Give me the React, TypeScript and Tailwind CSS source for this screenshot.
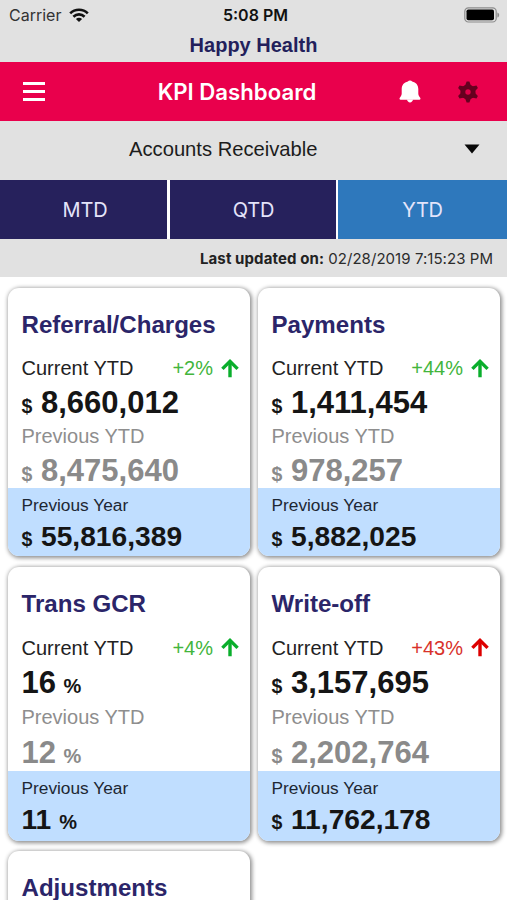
import React from "react";
import clsx from "clsx";

interface Kpi {
  title: string;
  change?: string;
  bad?: boolean;
  unit?: "$" | "%";
  current?: string;
  previous?: string;
  previousYear?: string;
  roomy?: boolean;
}

const kpis: Kpi[] = [
  { title: "Referral/Charges", change: "+2%", unit: "$", current: "8,660,012", previous: "8,475,640", previousYear: "55,816,389" },
  { title: "Payments", change: "+44%", unit: "$", current: "1,411,454", previous: "978,257", previousYear: "5,882,025" },
  { title: "Trans GCR", change: "+4%", unit: "%", current: "16", previous: "12", previousYear: "11", roomy: true },
  { title: "Write-off", change: "+43%", bad: true, unit: "$", current: "3,157,695", previous: "2,202,764", previousYear: "11,762,178", roomy: true },
  { title: "Adjustments" },
];

const WifiIcon = () => (
  <svg width="20" height="15" viewBox="0 0 20 15" fill="none" stroke="#111" strokeWidth="2.6">
    <path d="M1.2 5.4C6 0.6 14 0.6 18.8 5.4" />
    <path d="M4.4 8.7c3.2-3.1 8-3.1 11.2 0" />
    <path d="M10 14 6.9 10.9c1.8-1.7 4.4-1.7 6.2 0z" fill="#111" stroke="none" />
  </svg>
);

const BatteryIcon = () => (
  <svg width="36" height="16" viewBox="0 0 36 16">
    <rect x="0.8" y="0.8" width="31.4" height="14.2" rx="3.6" fill="none" stroke="#8c8c8c" strokeWidth="1.2" />
    <rect x="2.5" y="2.5" width="27.5" height="10.8" rx="1.8" fill="#000" />
    <path d="M33.4 5.4c2.4 0.9 2.4 4.2 0 5.1z" fill="#8c8c8c" />
  </svg>
);

const BellIcon = () => (
  <svg width="22" height="23" viewBox="0 0 22 23" fill="#fff">
    <path d="M11 0.5c-1 0-1.700 0.300-2.100 0.900C5 2.200 2.700 5 2.700 9v4.500c0 1.500-0.600 2.700-1.700 3.900-0.900 1-0.500 2.300 0.600 2.300h18.800c1.100 0 1.500-1.300 0.600-2.300-1.100-1.200-1.700-2.400-1.700-3.900V9c0-4-2.300-6.800-6.200-7.600C12.700 0.800 12 0.500 11 0.500z" />
    <path d="M8 19.500h6c-0.300 1.700-1.500 2.900-3 2.900s-2.700-1.200-3-2.900z" />
  </svg>
);

const GearIcon = () => (
  <svg width="22" height="22" viewBox="0 0 22 22">
    <g fill="#66001f">
      <circle cx="11" cy="11" r="7.600" />
      <path d="M9.600 0.400h2.800l1.600 4.600v12l-1.600 4.600H9.600L8 17V5z" />
      <path d="M9.600 0.400h2.800l1.600 4.600v12l-1.600 4.600H9.600L8 17V5z" transform="rotate(60 11 11)" />
      <path d="M9.600 0.400h2.800l1.600 4.600v12l-1.600 4.600H9.600L8 17V5z" transform="rotate(120 11 11)" />
    </g>
    <circle cx="11" cy="11" r="2.700" fill="#e0004a" />
  </svg>
);

const ArrowUp = () => (
  <svg width="18" height="19" viewBox="0 0 18 19" fill="none" stroke="currentColor" strokeWidth="3.400">
    <path d="M9 18.300V2.500" />
    <path d="M1.400 9.900 9 2.400l7.600 7.500" />
  </svg>
);

const Amount = ({ value, unit, small }: { value?: string; unit?: "$" | "%"; small?: boolean }) => (
  <div className="flex items-baseline whitespace-pre font-bold">
    {unit === "$" && <span className="w-[19.500px] shrink-0 text-[19.500px]">$</span>}
    <span className={small ? "text-[28.200px]" : "text-[31px]"}>{value}</span>
    {unit === "%" && <span className={clsx("text-[20px]", small ? "ml-2" : "ml-[7.500px]")}>%</span>}
  </div>
);

const KpiCard = ({ kpi }: { kpi: Kpi }) => (
  <div className="overflow-hidden rounded-[11px] bg-white shadow-[1px_1px_4px_1px_rgba(0,0,0,0.45)]">
    <div className={clsx("px-[13.500px] pt-5", kpi.roomy ? "h-[204px]" : "h-[200px]")}>
      <h2 className="text-[24.100px] leading-[34px] font-bold text-[#2b2569]">{kpi.title}</h2>
      {kpi.current && (
        <>
          <div className={clsx("flex h-7 items-center text-[20px] leading-7", kpi.roomy ? "mt-[13px]" : "mt-3")}>
            <span className="text-[#222]">Current YTD</span>
            <span className={clsx("ml-auto", kpi.bad ? "text-[#d8322a]" : "text-[#43b53c]")}>{kpi.change}</span>
            <span className={clsx("-mr-[2.500px] ml-2", kpi.bad ? "text-[#dd0000]" : "text-[#0aae2c]")}>
              <ArrowUp />
            </span>
          </div>
          <div className="h-[42px] leading-[42px] text-[#151515]">
            <Amount value={kpi.current} unit={kpi.unit} />
          </div>
          <div className={clsx("text-[20px] leading-6 text-[#8e8e8e]", kpi.roomy && "mt-px")}>Previous YTD</div>
          <div className={clsx("h-[37px] leading-[39px] text-[#8a8a8a]", kpi.roomy ? "mt-1" : "mt-[3px]")}>
            <Amount value={kpi.previous} unit={kpi.unit} />
          </div>
        </>
      )}
    </div>
    {kpi.previousYear && (
      <div className={clsx("bg-[#c0deff] px-[13.500px] pt-[5px] text-[#151515]", kpi.roomy ? "h-[70px]" : "h-[68px]")}>
        <div className="text-[17.300px] leading-6 text-[#1d2733]">Previous Year</div>
        <div className="leading-[38px]">
          <Amount value={kpi.previousYear} unit={kpi.unit} small />
        </div>
      </div>
    )}
  </div>
);

export default function App() {
  return (
    <div className="h-[900px] w-[507px] overflow-hidden bg-white font-['Liberation_Sans',Arial,sans-serif]">
      {/* status bar */}
      <div className="h-[62px] bg-[#e1e1e1]">
        <div className="grid h-[30px] grid-cols-3 items-center pr-[7px] pl-[9px] font-['Inter',sans-serif] text-[16px]">
          <div className="flex items-center gap-2 text-[#333]">
            <span>Carrier</span>
            <WifiIcon />
          </div>
          <span className="pl-[2px] text-center font-semibold text-[#111]">5:08 PM</span>
          <div className="flex justify-end">
            <BatteryIcon />
          </div>
        </div>
        <div className="text-center text-[20px] leading-[30px] font-bold text-[#231f5c]">Happy Health</div>
      </div>

      {/* header */}
      <header className="flex h-[59px] items-center bg-[#e9004c] pr-[28px] pl-[23px] text-white">
        <div className="flex w-[22px] flex-col gap-[5px]">
          <span className="h-[3px] bg-white" />
          <span className="h-[3px] bg-white" />
          <span className="h-[3px] bg-white" />
        </div>
        <h1 className="ml-[112px] w-[160px] text-center font-['Inter',sans-serif] text-[22.200px] font-semibold whitespace-nowrap">
          KPI Dashboard
        </h1>
        <div className="ml-auto flex items-center gap-9">
          <BellIcon />
          <GearIcon />
        </div>
      </header>

      <div className="flex h-[59px] items-center bg-[#e1e1e1] pr-[27px] pb-[3px] pl-[129px]">
        <span className="text-[20.200px] text-[#1c1c1c]">Accounts Receivable</span>
        <svg className="ml-auto" width="16" height="10" viewBox="0 0 16 10">
          <path d="M0.500 0.500h15L8 9.500z" fill="#080808" />
        </svg>
      </div>

      {/* period tabs */}
      <div className="grid h-[59px] grid-cols-[167px_166px_169px] gap-x-[2.500px] bg-white font-['Inter',sans-serif] text-[20px] text-[#e4e4fa]">
        <button className="bg-[#26215c] pt-px pl-[3px] tracking-[-0.200px]">MTD</button>
        <button className="bg-[#26215c] pt-px pl-[2px] tracking-[-0.200px]">QTD</button>
        <button className="bg-[#2e78bc] pt-px tracking-[-0.200px]">YTD</button>
      </div>

      <div className="h-[38px] bg-[#e1e1e1] pr-[14px] text-right font-['Inter',sans-serif] text-[15px] leading-[39px] text-[#2c2c2c]">
        <b className="font-bold tracking-[0.100px] text-[#222]">Last updated on:</b>{" "}
        <span className="tracking-[0.050px]">02/28/2019 7:15:23 PM</span>
      </div>

      <main className="grid grid-cols-[242px_242px] gap-x-2 gap-y-[10.500px] pt-[11px] pl-2">
        {kpis.map((kpi) => (
          <KpiCard key={kpi.title} kpi={kpi} />
        ))}
      </main>
    </div>
  );
}
